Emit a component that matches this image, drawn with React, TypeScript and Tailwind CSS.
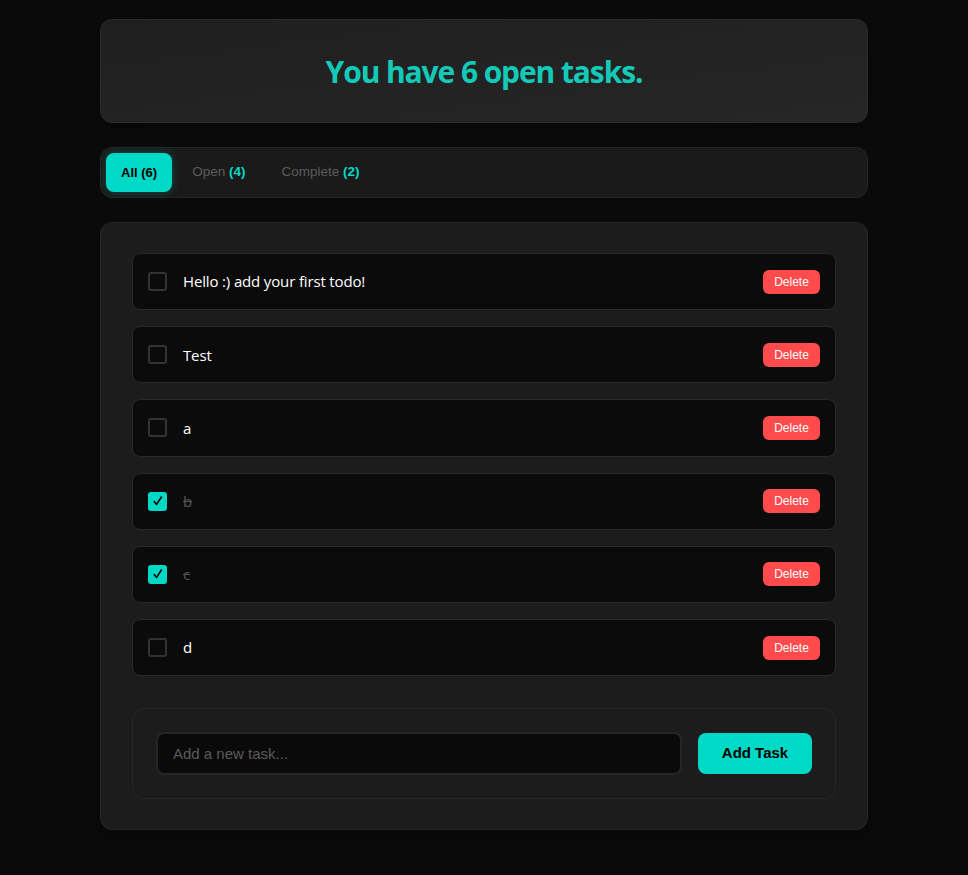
import React, { useState } from 'react';

type Filter = 'all' | 'open' | 'complete';

interface Todo {
  id: number;
  text: string;
  done: boolean;
}

const initialTodos: Todo[] = [
  { id: 1, text: 'Hello :) add your first todo!', done: false },
  { id: 2, text: 'Test', done: false },
  { id: 3, text: 'a', done: false },
  { id: 4, text: 'b', done: true },
  { id: 5, text: 'c', done: true },
  { id: 6, text: 'd', done: false },
];

const sans = { fontFamily: '"Liberation Sans", Arial, sans-serif' };
const ui = { fontFamily: '"Open Sans", "Noto Sans", sans-serif' };

export default function App() {
  const [todos, setTodos] = useState<Todo[]>(initialTodos);
  const [filter, setFilter] = useState<Filter>('all');
  const [draft, setDraft] = useState('');

  const openCount = todos.filter((t) => !t.done).length;
  const doneCount = todos.length - openCount;

  const visible = todos.filter((t) =>
    filter === 'all' ? true : filter === 'open' ? !t.done : t.done
  );

  const addTodo = () => {
    if (!draft.trim()) return;
    setTodos([...todos, { id: Date.now(), text: draft.trim(), done: false }]);
    setDraft('');
  };

  const tabs: { id: Filter; label: string; count: number }[] = [
    { id: 'all', label: 'All', count: todos.length },
    { id: 'open', label: 'Open', count: openCount },
    { id: 'complete', label: 'Complete', count: doneCount },
  ];

  return (
    <div className="min-h-screen bg-[#0a0a0a] pt-[19px] pb-12">
      <div className="mx-auto w-[768px] flex flex-col gap-6">
        {/* Header - note: the original counts every task here */}
        <div className="h-[104px] rounded-xl border border-[#2c2c2c] bg-gradient-to-br from-[#1f1f1f] to-[#262626] shadow-lg flex items-center justify-center">
          <h1 className="text-[30px] font-bold text-[#14c9b7] tracking-[-1.1px] pt-[1px]" style={ui}>
            You have {todos.length} open tasks.
          </h1>
        </div>

        {/* Filter tabs */}
        <div className="rounded-xl border border-[#262626] bg-[#1a1a1a] p-[5px] flex items-center gap-1" style={sans}>
          {tabs.map((tab) =>
            filter === tab.id ? (
              <button
                key={tab.id}
                onClick={() => setFilter(tab.id)}
                className="h-[39px] px-[15px] rounded-lg bg-[#00d9c5] text-black text-[13px] font-bold shadow-[0_0_10px_rgba(0,217,197,0.25)]"
              >
                {tab.label} ({tab.count})
              </button>
            ) : (
              <button
                key={tab.id}
                onClick={() => setFilter(tab.id)}
                className="h-[39px] px-[16px] rounded-lg text-[13.5px] text-[#5c5c5c]"
              >
                {tab.label} <span className="font-bold text-[#00d9c5]">({tab.count})</span>
              </button>
            )
          )}
        </div>

        {/* Main list */}
        <div className="rounded-xl border border-[#262626] bg-[#1c1c1c] py-[30px] px-[31px] shadow-xl">
          <div className="flex flex-col gap-4">
            {visible.map((todo) => (
              <div
                key={todo.id}
                className="h-[57.2px] rounded-lg border border-[#2a2a2a] bg-[#0b0b0b] pl-[15px] pr-[15px] flex items-center gap-4"
              >
                <button
                  onClick={() =>
                    setTodos(todos.map((t) => (t.id === todo.id ? { ...t, done: !t.done } : t)))
                  }
                  className={`w-[19px] h-[19px] rounded-[3px] flex items-center justify-center shrink-0 ${
                    todo.done ? 'bg-[#00d9c5]' : 'border-2 border-[#333333]'
                  }`}
                >
                  {todo.done && (
                    <svg width="12" height="12" viewBox="0 0 12 12" fill="none">
                      <path d="M2.2 6.6 L4.6 9.4 L9.4 2" stroke="#000" strokeWidth="1.6" strokeLinecap="round" strokeLinejoin="round" />
                    </svg>
                  )}
                </button>
                <span
                  className={`flex-1 text-[15px] tracking-[-0.15px] ${todo.done ? 'line-through text-[#555555]' : 'text-white'}`}
                  style={ui}
                >
                  {todo.text}
                </span>
                <button
                  onClick={() => setTodos(todos.filter((t) => t.id !== todo.id))}
                  className="w-[57px] h-[24px] rounded-md bg-[#ff4b4b] text-white text-[12px]"
                  style={sans}
                >
                  Delete
                </button>
              </div>
            ))}
          </div>

          {/* Add form */}
          <div className="mt-8 rounded-xl border border-[#262626] p-[23px] flex items-center gap-4">
            <input
              value={draft}
              onChange={(e) => setDraft(e.target.value)}
              onKeyDown={(e) => e.key === 'Enter' && addTodo()}
              placeholder="Add a new task..."
              className="flex-1 h-[43px] rounded-lg border-2 border-[#262626] bg-[#0a0a0a] px-[15px] text-[15px] text-white placeholder-[#5a5a5a] outline-none"
              style={sans}
            />
            <button
              onClick={addTodo}
              className="w-[114px] h-[41px] rounded-lg bg-[#00d9c5] text-black text-[15px] font-bold"
              style={sans}
            >
              Add Task
            </button>
          </div>
        </div>
      </div>
    </div>
  );
}
